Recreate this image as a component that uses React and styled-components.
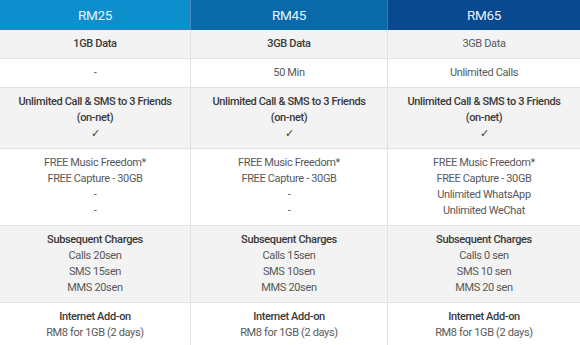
import React from "react"
import styled, { createGlobalStyle } from "styled-components"

const GlobalStyle = createGlobalStyle`
  html, body {
    margin: 0;
    padding: 0;
    background: #fff;
  }
`

const Table = styled.div`
  display: grid;
  grid-template-columns: 190px 197px 1fr;
  width: 580px;
  font-family: Roboto, "Liberation Sans", sans-serif;
  font-size: 11px;
  letter-spacing: -0.35px;
  color: #555;
`

const Head = styled.div`
  height: 30px;
  display: flex;
  align-items: center;
  justify-content: center;
  background: ${(p) => p.bg};
  color: #e6f4fb;
  font-size: 13.5px;
  letter-spacing: -0.3px;
  border-left: ${(p) => (p.first ? "none" : "1px solid rgba(255,255,255,0.25)")};
`

const Cell = styled.div`
  padding: 6px 4px;
  line-height: 16px;
  text-align: center;
  background: ${(p) => (p.shade ? "#f3f3f3" : "#fff")};
  border-bottom: 1px solid #e2e2e2;
  border-left: ${(p) => (p.first ? "none" : "1px solid #e2e2e2")};
  font-weight: ${(p) => (p.bold ? 500 : 400)};
  color: ${(p) => (p.bold ? "#3a3a3a" : "#595959")};
`

const Title = styled.div`
  font-weight: 500;
  color: #3a3a3a;
`

const heads = [
  { label: "RM25", bg: "#0d8fce" },
  { label: "RM45", bg: "#0a69a9" },
  { label: "RM65", bg: "#0a4890" },
]

const rows = [
  { shade: true, bold: [true, true, false], cells: [["1GB Data"], ["3GB Data"], ["3GB Data"]] },
  { shade: false, cells: [["-"], ["50 Min"], ["Unlimited Calls"]] },
  {
    shade: true,
    bold: [true, true, true],
    cells: [
      ["Unlimited Call & SMS to 3 Friends", "(on-net)", "✓"],
      ["Unlimited Call & SMS to 3 Friends", "(on-net)", "✓"],
      ["Unlimited Call & SMS to 3 Friends", "(on-net)", "✓"],
    ],
  },
  {
    shade: false,
    cells: [
      ["FREE Music Freedom*", "FREE Capture - 30GB", "-", "-"],
      ["FREE Music Freedom*", "FREE Capture - 30GB", "-", "-"],
      ["FREE Music Freedom*", "FREE Capture - 30GB", "Unlimited WhatsApp", "Unlimited WeChat"],
    ],
  },
  {
    shade: true,
    titled: true,
    cells: [
      ["Subsequent Charges", "Calls 20sen", "SMS 15sen", "MMS 20sen"],
      ["Subsequent Charges", "Calls 15sen", "SMS 10sen", "MMS 20sen"],
      ["Subsequent Charges", "Calls 0 sen", "SMS 10 sen", "MMS 20 sen"],
    ],
  },
  {
    shade: false,
    titled: true,
    cells: [
      ["Internet Add-on", "RM8 for 1GB (2 days)"],
      ["Internet Add-on", "RM8 for 1GB (2 days)"],
      ["Internet Add-on", "RM8 for 1GB (2 days)"],
    ],
  },
]

const App = () => (
  <>
    <GlobalStyle />
    <Table>
      {heads.map((h, i) => (
        <Head key={h.label} bg={h.bg} first={i === 0}>
          {h.label}
        </Head>
      ))}
      {rows.map((row, r) =>
        row.cells.map((lines, c) => (
          <Cell
            key={`${r}-${c}`}
            shade={row.shade}
            first={c === 0}
            bold={row.bold ? row.bold[c] : false}
          >
            {lines.map((line, l) =>
              row.titled && l === 0 ? (
                <Title key={l}>{line}</Title>
              ) : (
                <div key={l}>{line}</div>
              )
            )}
          </Cell>
        ))
      )}
    </Table>
  </>
)

export default App
